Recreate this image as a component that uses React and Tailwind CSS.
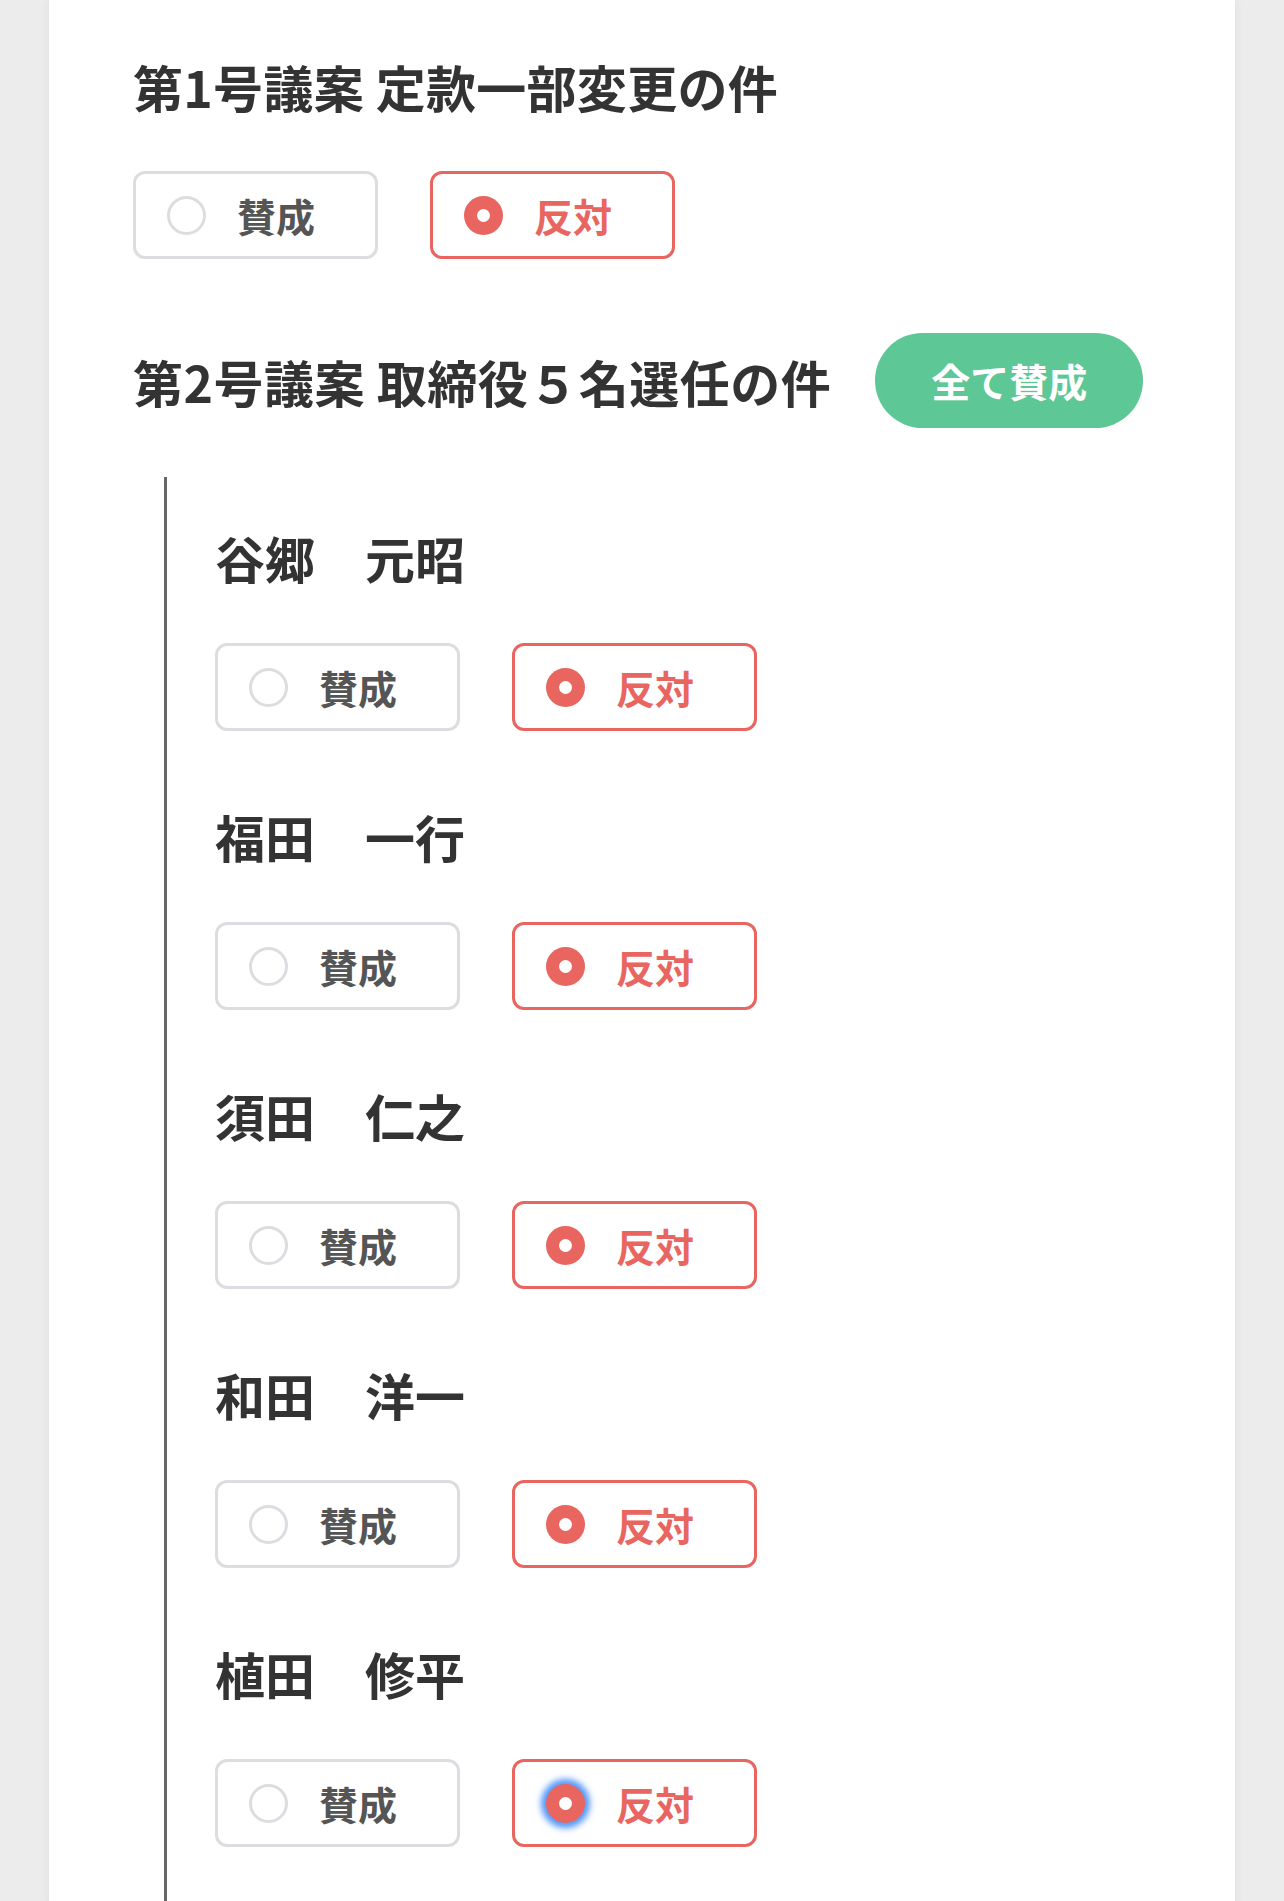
import { useState } from 'react';

const FONT = { fontFamily: '"Noto Sans CJK JP", "Noto Sans", sans-serif' };

const candidates = [
  { id: 1, name: '谷郷　元昭' },
  { id: 2, name: '福田　一行' },
  { id: 3, name: '須田　仁之' },
  { id: 4, name: '和田　洋一' },
  { id: 5, name: '植田　修平' },
];

const Radio = ({ checked, focused }) => (
  <span
    className={
      checked
        ? `flex items-center justify-center w-[39px] h-[39px] rounded-full bg-[#e8665f] ${focused ? 'shadow-[0_0_6px_5px_rgba(64,140,250,0.9)]' : ''}`
        : 'w-[39px] h-[39px] rounded-full border-[3px] border-[#dcdde0] bg-white'
    }
  >
    {checked && <span className="w-[13px] h-[13px] rounded-full bg-white" />}
  </span>
);

const VoteButtons = ({ value, onChange, focused }) => (
  <div className="flex gap-[52px]">
    <button
      onClick={() => onChange('yes')}
      className={`flex items-center gap-[31px] w-[245px] h-[88px] pl-[31px] rounded-[12px] border-[3px] bg-white ${
        value === 'yes' ? 'border-[#e8665f] text-[#e8665f]' : 'border-[#dcdde0] text-[#555]'
      }`}
    >
      <Radio checked={value === 'yes'} focused={focused} />
      <span className="text-[39px] font-bold leading-none">賛成</span>
    </button>
    <button
      onClick={() => onChange('no')}
      className={`flex items-center gap-[31px] w-[245px] h-[88px] pl-[31px] rounded-[12px] border-[3px] bg-white ${
        value === 'no' ? 'border-[#e8665f] text-[#e8665f]' : 'border-[#dcdde0] text-[#555]'
      }`}
    >
      <Radio checked={value === 'no'} focused={focused} />
      <span className="text-[39px] font-bold leading-none">反対</span>
    </button>
  </div>
);

export default function App() {
  const [first, setFirst] = useState('no');
  const [votes, setVotes] = useState({ 1: 'no', 2: 'no', 3: 'no', 4: 'no', 5: 'no' });

  const approveAll = () => {
    setVotes({ 1: 'yes', 2: 'yes', 3: 'yes', 4: 'yes', 5: 'yes' });
  };

  return (
    <div className="min-h-screen bg-[#ebeceb] px-[49px] overflow-hidden" style={FONT}>
      <div className="bg-white min-h-[1901px] pl-[84px] pt-[61px] shadow-[0_0_10px_rgba(0,0,0,0.06)] text-[#333]">
        {/* 第1号議案 */}
        <h2 className="text-[50px] font-bold leading-none tracking-[0.3px]">第1号議案 定款一部変更の件</h2>
        <div className="mt-[60px]">
          <VoteButtons value={first} onChange={setFirst} />
        </div>

        {/* 第2号議案 */}
        <div className="flex items-center mt-[74px]">
          <h2 className="text-[50px] font-bold leading-none tracking-[0.5px]">第2号議案 取締役５名選任の件</h2>
          <button
            onClick={approveAll}
            className="ml-[44px] w-[268px] h-[95px] rounded-full bg-[#5dc795] text-white text-[39px] font-bold leading-none"
          >
            全て賛成
          </button>
        </div>

        <div className="mt-[49px] ml-[31px] border-l-[3px] border-[#666] pl-[48px] pt-[55px] pb-[60px]">
          {candidates.map((c, i) => (
            <div key={c.id} className={i > 0 ? 'mt-[80px]' : ''}>
              <h3 className="text-[50px] font-bold leading-none">{c.name}</h3>
              <div className="mt-[61px]">
                <VoteButtons
                  value={votes[c.id]}
                  onChange={(v) => setVotes({ ...votes, [c.id]: v })}
                  focused={i === candidates.length - 1}
                />
              </div>
            </div>
          ))}
        </div>
      </div>
    </div>
  );
}
